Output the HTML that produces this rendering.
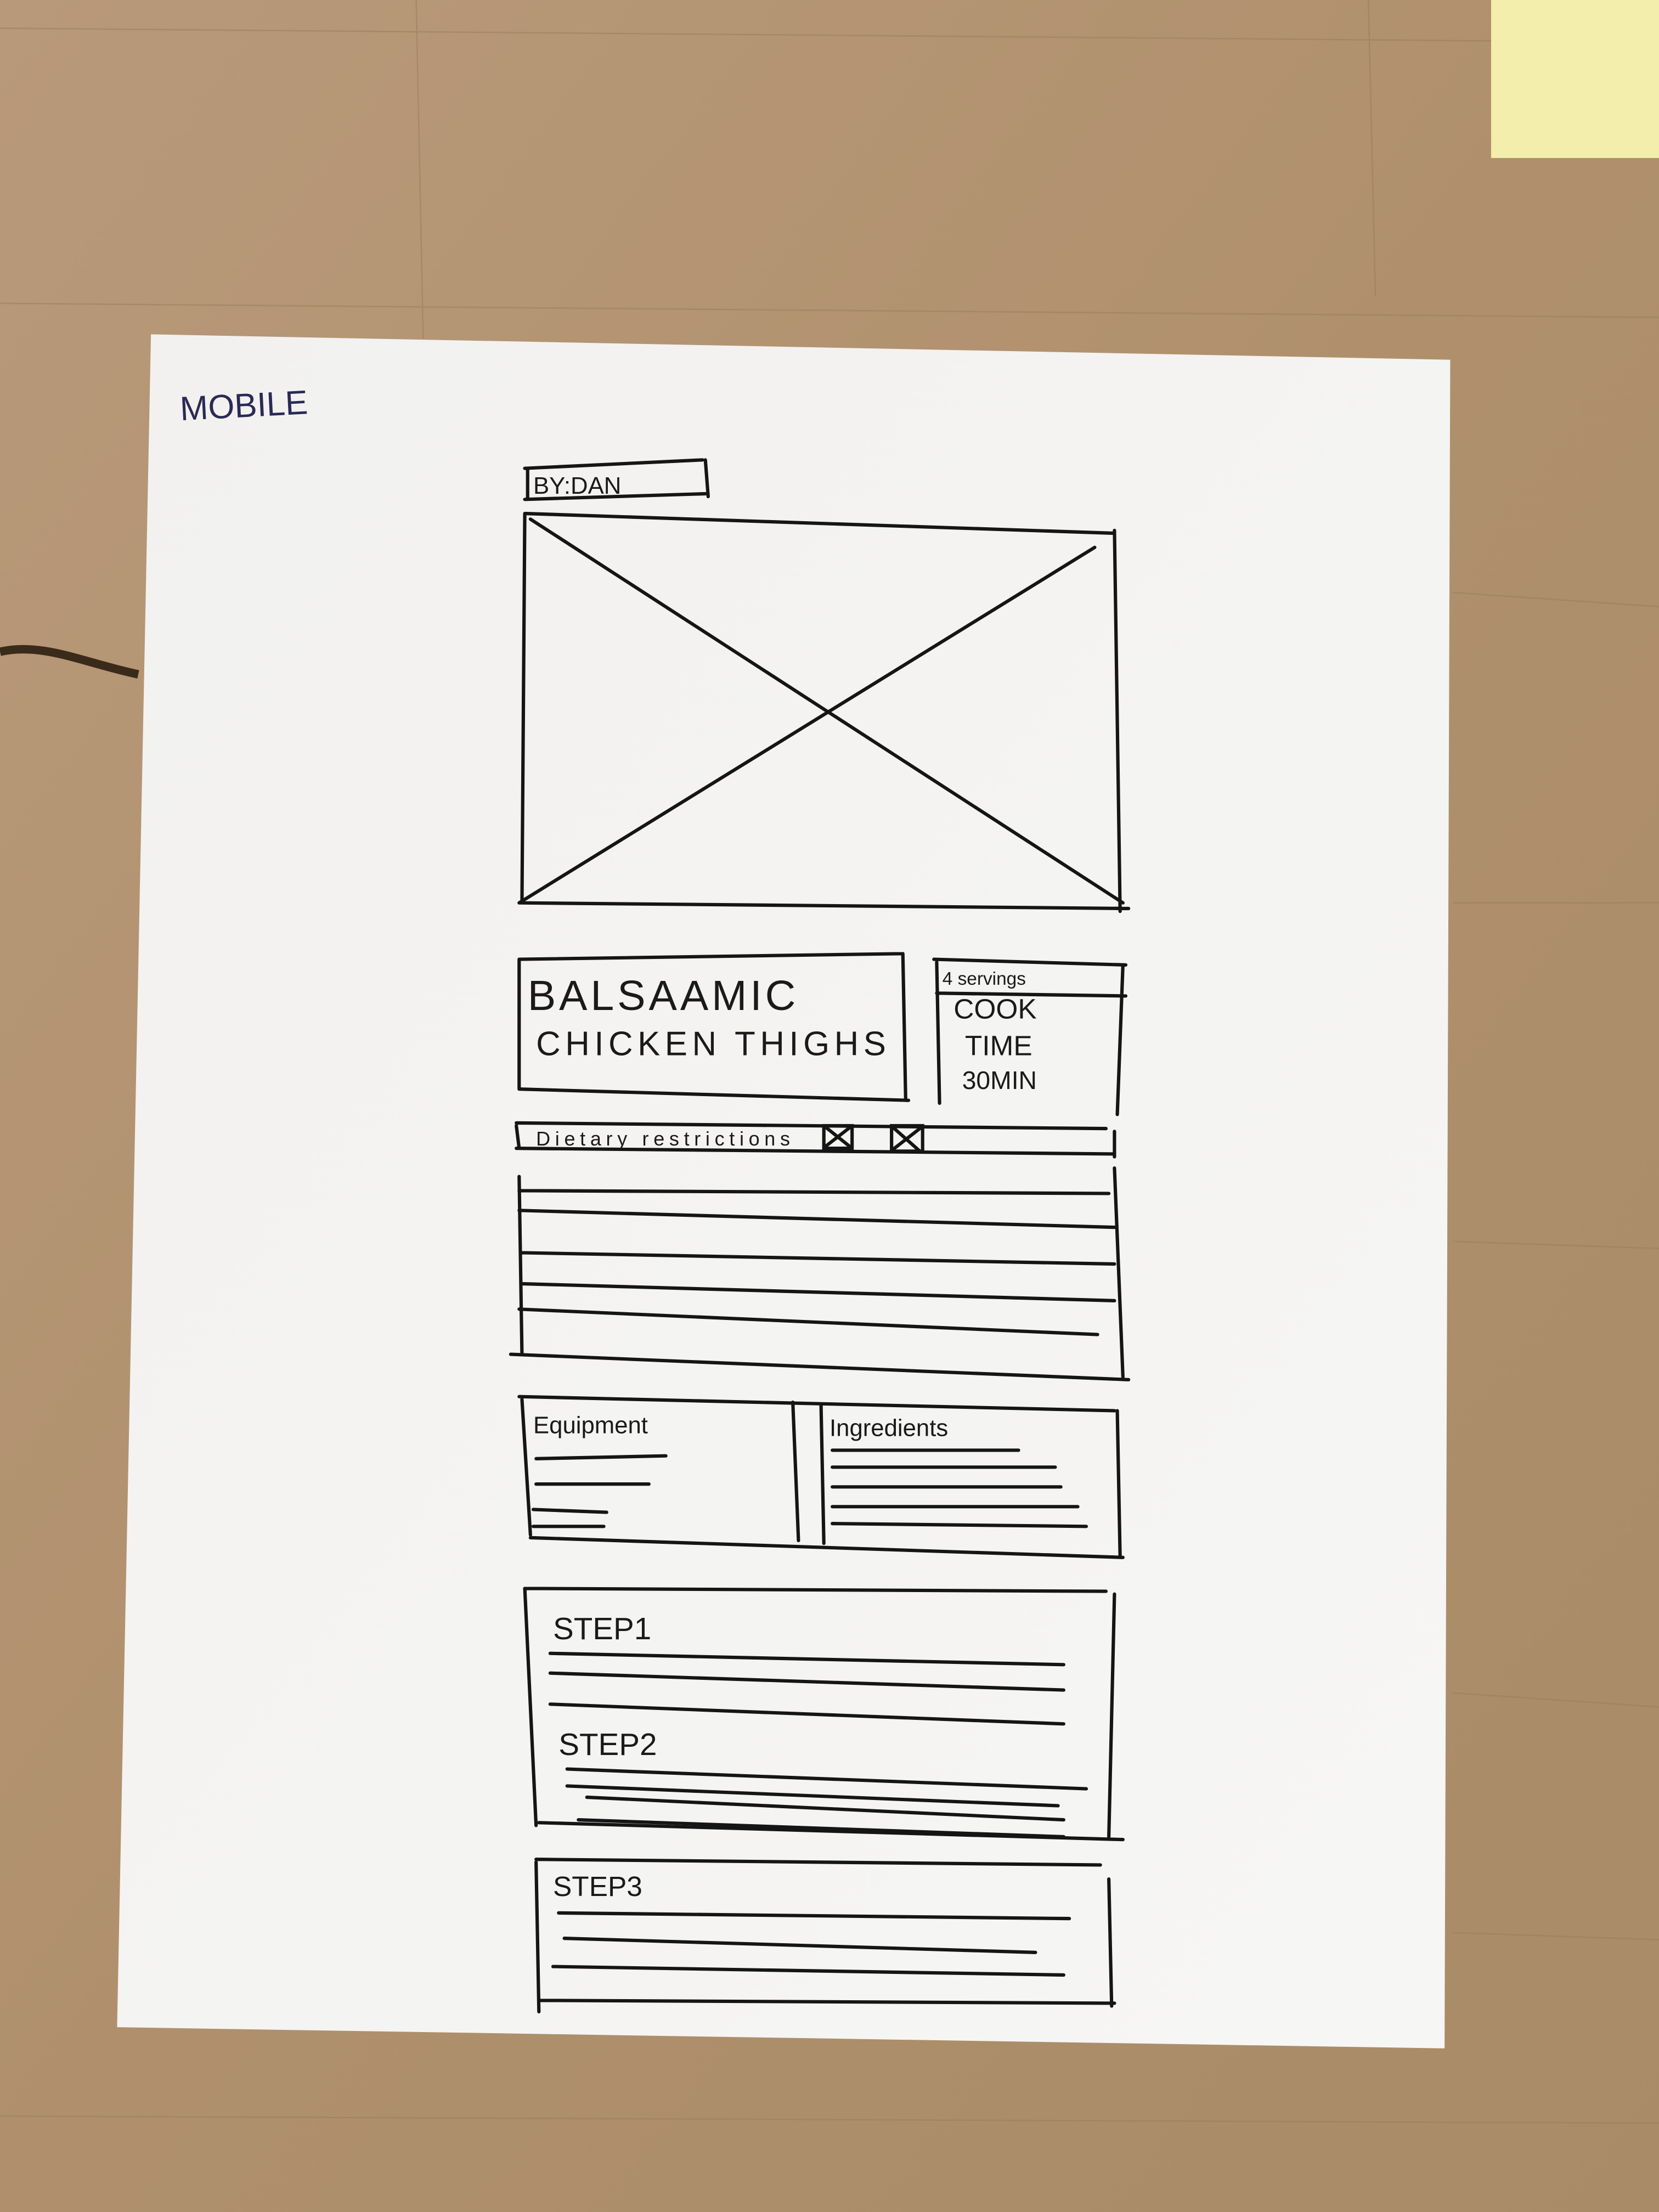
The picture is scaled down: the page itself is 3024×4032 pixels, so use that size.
<!DOCTYPE html>
<html><head><meta charset="utf-8"><style>
html,body{margin:0;padding:0;width:3024px;height:4032px;overflow:hidden;background:#b09170}
svg{display:block}
text{font-family:"Liberation Sans",sans-serif;fill:#1a1a1a}
</style></head><body>
<svg width="3024" height="4032" viewBox="0 0 1176 1568" preserveAspectRatio="none">
<defs>
<linearGradient id="wood" x1="0" y1="0" x2="1" y2="1">
<stop offset="0" stop-color="#b8997a"/><stop offset="0.5" stop-color="#b0906c"/><stop offset="1" stop-color="#a98b68"/>
</linearGradient>
<linearGradient id="paper" x1="0" y1="0" x2="1" y2="1">
<stop offset="0" stop-color="#f2f1ef"/><stop offset="1" stop-color="#f6f6f5"/>
</linearGradient>
</defs>
<rect width="1176" height="1568" fill="url(#wood)"/>
<g stroke="#9a7c5c" stroke-width="1" opacity="0.5" fill="none">
<path d="M0 20 L1176 30"/><path d="M0 215 L1176 225"/><path d="M295 0 L300 240"/><path d="M1030 420 L1176 430"/><path d="M1030 640 L1176 640"/><path d="M1030 880 L1176 885"/><path d="M1030 1200 L1176 1210"/><path d="M1030 1370 L1176 1375"/><path d="M0 1500 L1176 1505"/><path d="M970 0 L975 210"/>
</g>
<path d="M0 462 C30 455 60 470 98 478" stroke="#3a2a1a" stroke-width="6" fill="none"/>
<rect x="1057" y="0" width="119" height="112" fill="#f3eeab"/>
<polygon points="107,237 1028,255 1024,1452 83,1437" fill="url(#paper)"/>
<g stroke="#151515" stroke-width="2.4" fill="none" stroke-linecap="round">
<!-- BY DAN -->
<path d="M372 332 L498 326 M374 332 L374 354 M372 354 L500 350 M500 326 L502 352"/>
<!-- image placeholder -->
<path d="M372 364 L790 378 M372 364 L370 640 M790 376 L794 646 M368 640 L800 644 M376 368 L796 640 M368 640 L776 388"/>
<!-- title box -->
<path d="M368 680 L640 676 M368 680 L368 772 M640 676 L642 780 M368 772 L644 780"/>
<!-- servings box -->
<path d="M662 680 L798 684 M664 682 L666 782 M796 684 L792 790 M664 704 L798 706"/>
<!-- dietary -->
<path d="M366 796 L784 800 M366 798 L368 814 M366 814 L790 818 M790 802 L790 820"/>
<path d="M584 798 L604 798 L604 814 L584 814 Z M584 798 L604 814 M604 798 L586 812"/>
<path d="M632 798 L654 798 L654 816 L632 816 Z M634 800 L652 816 M652 800 L634 814"/>
<!-- description -->
<path d="M368 834 L370 960 M790 828 L796 976 M368 844 L786 846 M368 858 L790 870 M370 888 L790 896 M370 910 L790 922 M368 928 L778 946 M362 960 L800 978"/>
<!-- equipment / ingredients -->
<path d="M368 990 L790 1000 M370 992 L376 1088 M376 1090 L796 1104 M562 994 L566 1092 M582 996 L584 1094 M792 1000 L794 1104"/>
<path d="M380 1034 L472 1032 M380 1052 L460 1052 M378 1070 L430 1072 M378 1082 L428 1082"/>
<path d="M590 1028 L722 1028 M590 1040 L748 1040 M590 1054 L752 1054 M590 1068 L764 1068 M590 1080 L770 1082"/>
<!-- steps 1-2 box -->
<path d="M372 1126 L784 1128 M372 1126 L380 1294 M790 1130 L786 1302 M382 1292 L796 1304"/>
<path d="M390 1172 L754 1180 M390 1186 L754 1198 M390 1208 L754 1222"/>
<path d="M402 1254 L770 1268 M402 1266 L750 1280 M416 1274 L754 1290 M410 1290 L754 1302"/>
<!-- step 3 box -->
<path d="M380 1318 L780 1322 M380 1320 L382 1426 M786 1332 L788 1422 M382 1418 L790 1420"/>
<path d="M396 1356 L758 1360 M400 1374 L734 1384 M392 1394 L754 1400"/>
</g>
<text x="128" y="298" font-size="24" fill="#2a2a55" style="fill:#2a2a55" transform="rotate(-3 128 298)">MOBILE</text>
<text x="378" y="350" font-size="17">BY:DAN</text>
<text x="374" y="716" font-size="30" textLength="190">BALSAAMIC</text>
<text x="380" y="748" font-size="24" textLength="248">CHICKEN THIGHS</text>
<text x="668" y="698" font-size="13">4 servings</text>
<text x="676" y="722" font-size="20">COOK</text>
<text x="684" y="748" font-size="20">TIME</text>
<text x="682" y="772" font-size="18">30MIN</text>
<text x="380" y="812" font-size="14" textLength="180">Dietary restrictions</text>
<text x="378" y="1016" font-size="17">Equipment</text>
<text x="588" y="1018" font-size="17">Ingredients</text>
<text x="392" y="1162" font-size="22">STEP1</text>
<text x="396" y="1244" font-size="22">STEP2</text>
<text x="392" y="1344" font-size="20">STEP3</text>
</svg>
</body></html>
